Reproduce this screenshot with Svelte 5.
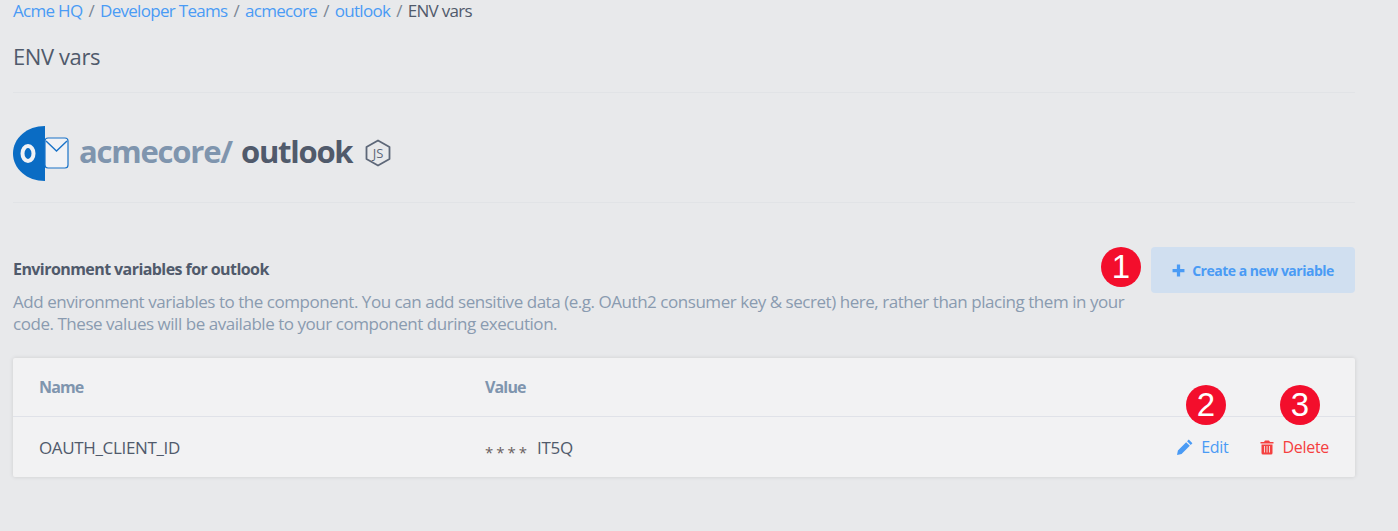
<script lang="ts">
  const crumbs = ['Acme HQ', 'Developer Teams', 'acmecore', 'outlook'];
  const envVars = [{ name: 'OAUTH_CLIENT_ID', suffix: 'IT5Q' }];
</script>

<div class="page">
  <nav class="crumbs">
    {#each crumbs as c}
      <a href="#top">{c}</a><span class="sep">/</span>
    {/each}
    <span class="current">ENV vars</span>
  </nav>

  <h1 class="title">ENV vars</h1>

  <div class="repo">
    <svg class="logo" width="56" height="56" viewBox="0 0 56 56">
      <path d="M32 0 C14 0 0 12 0 27.500 C0 43 14 55 32 55 Z" fill="#0a6cc4" />
      <rect x="32" y="12" width="23" height="30" rx="3" fill="#f1f2f5" stroke="#1a73c8" stroke-width="1.200" />
      <path d="M33 15 L43.500 25 L54 15" fill="none" stroke="#1a73c8" stroke-width="1.400" />
      <ellipse cx="15" cy="27.500" rx="5.500" ry="7.500" fill="none" stroke="#f1f2f5" stroke-width="4" />
    </svg>
    <span class="org">acmecore/</span>
    <span class="comp">outlook</span>
    <svg class="node" width="26" height="28" viewBox="0 0 26 28">
      <path d="M13 1.500 L24.500 8 V20 L13 26.500 L1.500 20 V8 Z" fill="none" stroke="#5d6778" stroke-width="1.800" stroke-linejoin="round" />
      <text x="13" y="19" text-anchor="middle" class="js">JS</text>
    </svg>
  </div>

  <section class="env">
    <div class="intro">
      <h2>Environment variables for outlook</h2>
      <p>Add environment variables to the component. You can add sensitive data (e.g. OAuth2 consumer key &amp; secret) here, rather than placing them in your code. These values will be available to your component during execution.</p>
    </div>
    <button class="create">
      <svg width="13" height="13" viewBox="0 0 12 12"><path d="M4.500 0.500h3v4h4v3h-4v4h-3v-4h-4v-3h4z" fill="#4a9bf5" /></svg>
      Create a new variable
    </button>
    <span class="badge b1">1</span>
  </section>

  <div class="card">
    <div class="row head">
      <span class="c-name">Name</span>
      <span class="c-value">Value</span>
    </div>
    {#each envVars as v}
      <div class="row">
        <span class="c-name">{v.name}</span>
        <span class="c-value"><span class="stars">****</span> {v.suffix}</span>
        <span class="actions">
          <a class="edit" href="#top">
            <svg width="16" height="16" viewBox="1 1 14 14"><path d="M11.300 1.500 L14.500 4.700 L13 6.200 L9.800 3 Z M9 3.800 L12.200 7 L5 14.200 L1 15 L1.800 11 Z" fill="#4a9bf5" /></svg>
            Edit
          </a>
          <a class="delete" href="#top">
            <svg width="14" height="15" viewBox="0 0 14 15"><path d="M5 0.500h4l1 1.500h3.500v1.500h-13V2H4Z M1.500 4.500h11V13a1.500 1.500 0 0 1-1.500 1.500H3A1.500 1.500 0 0 1 1.500 13Z" fill="#f5403f" /><path d="M4.500 6v6.500M7 6v6.500M9.500 6v6.500" stroke="#f3d5d3" stroke-width="1" /></svg>
            Delete
          </a>
        </span>
        <span class="badge b2">2</span>
        <span class="badge b3">3</span>
      </div>
    {/each}
  </div>
</div>

<style>
  :global(body) { margin: 0; background: #e8e9eb; }
  .page { height: 531px; box-sizing: border-box; padding: 0 43px 0 13px; font-family: "Open Sans", "Noto Sans", sans-serif; color: #505a6b; overflow: hidden; }
  a { color: #4a9bf5; text-decoration: none; }
  .crumbs { display: flex; font-size: 17px; line-height: 22px; white-space: nowrap; letter-spacing: -0.7px; }
  .sep { margin: 0 6px; color: #7a8594; }
  .title { margin: 0; padding: 16px 0 18px; font-size: 22px; line-height: 36px; height: 36px; font-weight: 400; border-bottom: 1px solid #e1e3e6; letter-spacing: -0.4px; }
  .repo { display: flex; align-items: center; box-sizing: border-box; height: 110px; padding-top: 11px; border-bottom: 1px solid #e1e3e6; }
  .logo { margin: 1px 10px 0 0; flex-shrink: 0; }
  .org { font-size: 31px; font-weight: 700; color: #7f95ae; letter-spacing: -1.2px; margin-right: 9px; margin-bottom: 4px; }
  .comp { font-size: 31px; font-weight: 700; color: #505a6b; letter-spacing: -1.25px; margin-bottom: 4px; }
  .node { margin-left: 13px; }
  .js { font-size: 13px; font-weight: 400; fill: #5d6778; font-family: "Open Sans", sans-serif; }
  .env { position: relative; display: flex; justify-content: space-between; margin-top: 44px; height: 111px; }
  .intro { width: 1125px; }
  h2 { margin: 12px 0 0; font-size: 16px; line-height: 20px; font-weight: 700; letter-spacing: -0.57px; color: #505a6b; }
  p { margin: 12px 0 0; font-size: 17px; line-height: 22px; color: #8a9bb0; letter-spacing: -0.46px; }
  .create { display: flex; align-items: center; justify-content: center; gap: 7px; width: 204px; height: 46px; padding: 0; border: 0; border-radius: 4px; background: #d0dff0; color: #4a9bf5; font-family: inherit; font-size: 14px; font-weight: 700; letter-spacing: -0.5px; }
  .card { background: #f2f2f3; border-radius: 2px; box-shadow: 0 0 4px rgba(0, 0, 0, 0.12); }
  .row { position: relative; display: flex; align-items: center; padding: 0 26px; height: 60px; font-size: 17px; letter-spacing: -0.35px; }
  .row.head { height: 58px; border-bottom: 1px solid #e0e2e8; font-weight: 700; color: #7f95ae; font-size: 16px; letter-spacing: -0.85px; }
  .c-name { width: 446px; }
  .c-value { flex: 1; }
  .stars { letter-spacing: 3px; font-size: 15px; position: relative; top: 4px; color: #6a5f60; margin-right: 3px; }
  .actions { display: flex; gap: 32px; font-size: 16px; letter-spacing: -0.3px; }
  .actions a { display: flex; align-items: center; gap: 8px; }
  .delete { color: #f5403f; }
  .badge { position: absolute; width: 40px; height: 40px; border-radius: 50%; background: #f30e2c; color: #fff; font-family: "Liberation Sans", sans-serif; font-size: 33px; line-height: 40px; text-align: center; letter-spacing: 0; }
  .b1 { right: 214px; top: 0; }
  .b2 { right: 129px; top: -32px; }
  .b3 { right: 35px; top: -32px; }
</style>
